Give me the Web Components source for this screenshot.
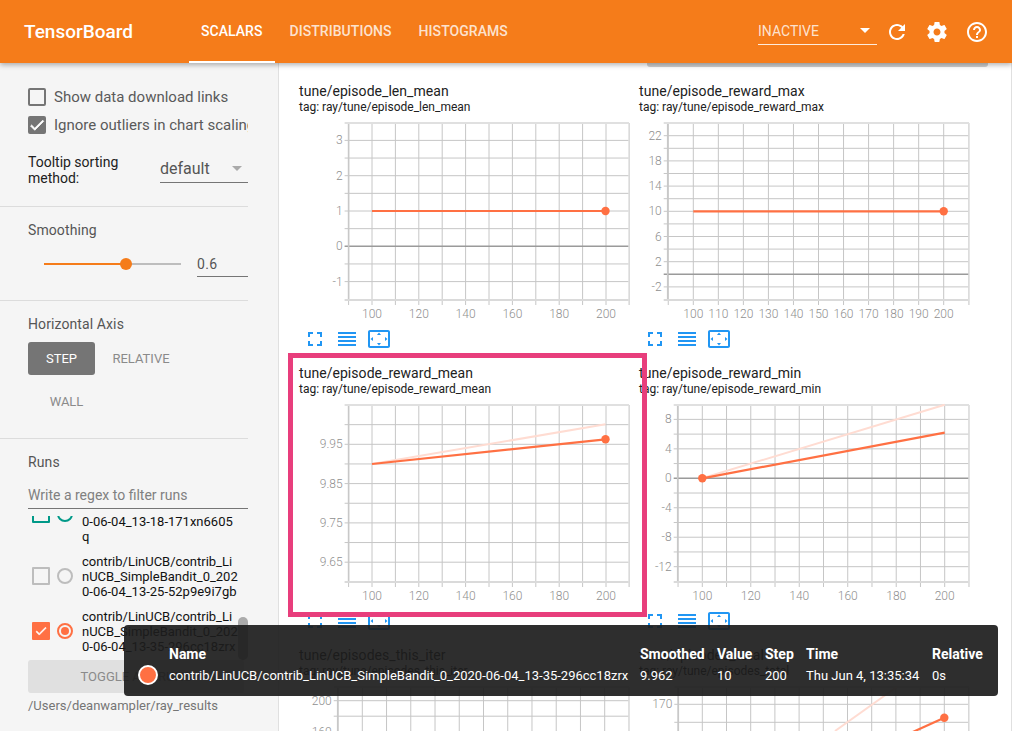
<!doctype html>
<html>
<head>
<meta charset="utf-8">
<title>TensorBoard</title>
<style>
html, body {
  margin: 0;
  height: 100%;
  overflow: hidden;
  background: white;
  font-family: Roboto, "Liberation Sans", sans-serif;
}
</style>
</head>
<body>
<tb-app>
  <tb-header></tb-header>
  <div slot="body" style="display: flex; height: 668px;">
    <tb-sidebar></tb-sidebar>
    <tb-main>
      <scalar-card name="tune/episode_len_mean" tag="ray/tune/episode_len_mean"
        spec='{"l":49.6,"r":330,"xa":73,"xs":23.4,"every":2,"ya":97,"va":1,"ys":17.65,"vs":0.5,"dp":0,"main":[[73,97],[306.5,97]],"dotAt":[306.5,97]}'></scalar-card>
      <scalar-card name="tune/episode_reward_max" tag="ray/tune/episode_reward_max"
        spec='{"l":28.7,"r":330,"xa":54.3,"xs":25.04,"every":1,"ya":97.3,"va":10,"ys":12.6,"vs":2,"dp":0,"main":[[54.3,97.3],[304.7,97.3]],"dotAt":[304.7,97.3]}'></scalar-card>
      <scalar-card name="tune/episode_reward_mean" tag="ray/tune/episode_reward_mean"
        spec='{"l":49.6,"r":330,"xa":73,"xs":23.4,"every":2,"ya":48.3,"va":9.95,"ys":19.65,"vs":-0.05,"dp":2,"main":[[73,68],[306.5,43.3]],"faint":[[73,68],[306.5,28.3]],"dotAt":[306.5,43.3]}'></scalar-card>
      <scalar-card name="tune/episode_reward_min" tag="ray/tune/episode_reward_min"
        spec='{"l":38.7,"r":330,"xa":63.3,"xs":24.24,"every":2,"ya":82.3,"va":0,"ys":14.73,"vs":-2,"dp":0,"main":[[63.3,82.3],[305.7,36.7]],"faint":[[63.3,82.3],[305.7,8.7]],"dotAt":[63.3,82.3]}'></scalar-card>
      <scalar-card name="tune/episodes_this_iter" tag="ray/tune/episodes_this_iter"
        spec='{"l":38.7,"r":330,"xa":63.3,"xs":24.24,"every":2,"ya":22.7,"va":200,"ys":15.5,"vs":-20,"dp":0}'></scalar-card>
      <scalar-card name="tune/episodes_total" tag="ray/tune/episodes_total"
        spec='{"l":39.3,"r":330,"xa":63.3,"xs":24.2,"every":2,"ya":26.3,"va":170,"ys":18,"vs":-5,"dp":0,"main":[[200,87.5],[305.3,39.7]],"faint":[[196,53],[257.7,9]],"dotAt":[305.3,39.7]}'></scalar-card>
    </tb-main>
  </div>
  <tb-highlight></tb-highlight>
  <tb-tooltip></tb-tooltip>
</tb-app>

<script>
'use strict';

(function() {

const ICONS = {
  refresh: 'M17.65 6.35C16.2 4.9 14.21 4 12 4c-4.42 0-7.99 3.58-7.99 8s3.57 8 7.99 8c3.73 0 6.84-2.55 7.73-6h-2.08c-.82 2.33-3.04 4-5.65 4-3.31 0-6-2.69-6-6s2.69-6 6-6c1.66 0 3.14.69 4.22 1.78L13 11h7V4l-2.35 2.35z',
  settings: 'M19.43 12.98c.04-.32.07-.64.07-.98s-.03-.66-.07-.98l2.11-1.65c.19-.15.24-.42.12-.64l-2-3.46c-.12-.22-.39-.3-.61-.22l-2.49 1c-.52-.4-1.08-.73-1.69-.98l-.38-2.65C14.46 2.18 14.25 2 14 2h-4c-.25 0-.46.18-.49.42l-.38 2.65c-.61.25-1.17.59-1.69.98l-2.49-1c-.23-.09-.49 0-.61.22l-2 3.46c-.13.22-.07.49.12.64l2.11 1.65c-.04.32-.07.65-.07.98s.03.66.07.98l-2.11 1.65c-.19.15-.24.42-.12.64l2 3.46c.12.22.39.3.61.22l2.49-1c.52.4 1.08.73 1.69.98l.38 2.65c.03.24.24.42.49.42h4c.25 0 .46-.18.49-.42l.38-2.65c.61-.25 1.17-.59 1.69-.98l2.49 1c.23.09.49 0 .61-.22l2-3.46c.12-.22.07-.49-.12-.64l-2.11-1.65zM12 15.5c-1.93 0-3.5-1.57-3.5-3.5s1.57-3.5 3.5-3.5 3.5 1.57 3.5 3.5-1.57 3.5-3.5 3.5z',
  help: 'M11 18h2v-2h-2v2zm1-16C6.48 2 2 6.48 2 12s4.48 10 10 10 10-4.48 10-10S17.52 2 12 2zm0 18c-4.41 0-8-3.59-8-8s3.59-8 8-8 8 3.59 8 8-3.59 8-8 8zm0-14c-2.21 0-4 1.79-4 4h2c0-1.1.9-2 2-2s2 .9 2 2c0 2-3 1.75-3 5h2c0-2.25 3-2.5 3-5 0-2.21-1.79-4-4-4z',
  fullscreen: 'M7 14H5v5h5v-2H7v-3zm-2-4h2V7h3V5H5v5zm12 7h-3v2h5v-5h-2v3zM14 5v2h3v3h2V5h-5z',
  reorder: 'M3 15h18v-2H3v2zm0 4h18v-2H3v2zm0-8h18V9H3v2zm0-6v2h18V5H3z',
  overscan: 'M12.01 5.5L10 8h4l-1.99-2.5zM18 10v4l2.5-1.99L18 10zM6 10l-2.5 2.01L6 14v-4zm8 6h-4l2.01 2.5L14 16zm7-13H3c-1.1 0-2 .9-2 2v14c0 1.1.9 2 2 2h18c1.1 0 2-.9 2-2V5c0-1.1-.9-2-2-2zm0 16.01H3V4.99h18v14.02z',
};

function icon(name) {
  return `<svg width="24" height="24" viewBox="0 0 24 24" fill="currentColor"><path d="${ICONS[name]}"/></svg>`;
}

const CHECK = `<svg width="18" height="18" viewBox="0 0 24 24" fill="white"><path d="M9 16.17L4.83 12l-1.42 1.41L9 19 21 7l-1.41-1.41z" stroke="white" stroke-width="1"/></svg>`;

class TbApp extends HTMLElement {
  constructor() {
    super();
    const root = this.attachShadow({mode: 'open'});
    root.innerHTML = `
<style>
:host {
  display: block;
  position: relative;
  width: 1012px;
  height: 731px;
  overflow: hidden;
}
</style>
<slot></slot>
<slot name="body"></slot>
    `;
  }
}

class TbHeader extends HTMLElement {
  constructor() {
    super();
    const root = this.attachShadow({mode: 'open'});
    root.innerHTML = `
<style>
:host {
  display: flex;
  align-items: center;
  position: relative;
  z-index: 2;
  height: 63px;
  background: #f57c1a;
  color: white;
  box-shadow: 0 2px 5px rgba(0, 0, 0, 0.3);
}
#name {
  font-size: 19px;
  font-weight: 500;
  margin-left: 24px;
  width: 165px;
}
#tabs {
  display: flex;
  align-self: stretch;
  flex: 1;
  font-size: 14px;
  font-weight: 500;
  letter-spacing: 0.05px;
}
.tab {
  display: flex;
  align-items: center;
  justify-content: center;
  padding: 0 14px;
  color: rgba(255, 255, 255, 0.8);
  box-sizing: border-box;
  border-bottom: 2px solid transparent;
}
.tab:nth-child(2) {
  padding: 0 13px 0 15px;
}
.tab.on {
  color: white;
  border-bottom-color: white;
  padding: 0 12px;
  min-width: 85px;
}
#picker {
  box-sizing: border-box;
  width: 119px;
  height: 25px;
  margin-top: 1px;
  padding-bottom: 2px;
  border-bottom: 1px solid rgba(255, 255, 255, 0.85);
  font-size: 14px;
  color: rgba(255, 255, 255, 0.8);
  display: flex;
  align-items: center;
  justify-content: space-between;
}
#arrow {
  width: 0;
  height: 0;
  margin-right: 7px;
  border: 5px solid transparent;
  border-top-color: white;
  border-bottom: 0;
}
#icons {
  display: flex;
  margin: 0 23px 0 8px;
  gap: 16px;
  width: 104px;
}
#icons svg { display: block; flex: none; }
</style>
<div id="name">TensorBoard</div>
<div id="tabs">
  <div class="tab on">SCALARS</div>
  <div class="tab">DISTRIBUTIONS</div>
  <div class="tab">HISTOGRAMS</div>
</div>
<div id="picker"><span>INACTIVE</span><span id="arrow"></span></div>
<div id="icons">${icon('refresh')}${icon('settings')}${icon('help')}</div>
    `;
  }
}

class TbCheckbox extends HTMLElement {
  constructor() {
    super();
    const root = this.attachShadow({mode: 'open'});
    const checked = this.hasAttribute('checked');
    root.innerHTML = `
<style>
:host {
  display: flex;
  align-items: center;
  gap: 8px;
  white-space: nowrap;
  overflow: hidden;
  font-size: 15px;
  color: #5a5a5a;
}
#box {
  flex: none;
  box-sizing: border-box;
  width: 18px;
  height: 18px;
  border-radius: 2px;
  border: 2px solid #757575;
  display: flex;
  align-items: center;
  justify-content: center;
}
:host([checked]) #box {
  background: #757575;
}
svg { flex: none; }
</style>
<div id="box">${checked ? CHECK : ''}</div>
<slot></slot>
    `;
  }
}

class TbRun extends HTMLElement {
  constructor() {
    super();
    const root = this.attachShadow({mode: 'open'});
    const color = this.getAttribute('color') || '#bdbdbd';
    const checked = this.hasAttribute('checked');
    root.innerHTML = `
<style>
:host {
  display: flex;
  align-items: center;
  padding: 5px 0;
  font-size: 13px;
  line-height: 15px;
  color: #111;
}
#box {
  flex: none;
  box-sizing: border-box;
  width: 18px;
  height: 18px;
  margin-left: 4px;
  border-radius: 1px;
  border: 2px solid ${color};
  background: ${checked ? color : 'transparent'};
  display: flex;
  align-items: center;
  justify-content: center;
}
#radio {
  flex: none;
  box-sizing: border-box;
  width: 16px;
  height: 16px;
  margin: 0 9px 0 7px;
  border-radius: 50%;
  border: 2px solid ${color};
  display: flex;
  align-items: center;
  justify-content: center;
}
#dot {
  width: 8px;
  height: 8px;
  border-radius: 50%;
  background: ${checked ? color : 'transparent'};
}
#text {
  width: 156px;
  word-break: break-all;
}
</style>
<div id="box">${checked ? CHECK : ''}</div>
<div id="radio"><div id="dot"></div></div>
<div id="text"><slot></slot></div>
    `;
  }
}

class TbSidebar extends HTMLElement {
  constructor() {
    super();
    const root = this.attachShadow({mode: 'open'});
    root.innerHTML = `
<style>
:host {
  display: block;
  flex: none;
  position: relative;
  box-sizing: border-box;
  width: 279px;
  height: 668px;
  background: #f5f5f5;
  border-right: 1px solid #e0e0e0;
  overflow: hidden;
  color: #555;
  font-size: 14px;
}
section {
  box-sizing: border-box;
  width: 248px;
  padding-left: 28px;
  border-bottom: 1px solid #dcdcdc;
}
#one { height: 144px; padding-top: 25px; }
#two { height: 94px; padding-top: 15px; }
#three { height: 138px; padding-top: 15px; }
#four { border: 0; padding-top: 15px; }
h3 {
  margin: 0;
  font-size: 14px;
  font-weight: 400;
  line-height: 16px;
  letter-spacing: 0.1px;
  color: #555;
}
tb-checkbox + tb-checkbox { margin-top: 10px; }
#sort {
  display: flex;
  margin-top: 20px;
  color: #212121;
}
#sort label {
  width: 132px;
  font-size: 14px;
  line-height: 15.5px;
  padding-top: 1px;
}
#select {
  box-sizing: border-box;
  flex: 1;
  height: 30px;
  margin-top: -1px;
  padding-top: 2px;
  border-bottom: 1px solid #757575;
  display: flex;
  align-items: center;
  justify-content: space-between;
  font-size: 16px;
  color: #555;
}
#select i {
  width: 0;
  height: 0;
  margin-right: 6px;
  border: 5px solid transparent;
  border-top-color: #aaa;
  border-bottom: 0;
}
#slider {
  display: flex;
  align-items: flex-start;
  margin-top: 14px;
  height: 32px;
}
#track {
  position: relative;
  width: 137px;
  height: 2px;
  margin: 11px 0 0 16px;
  background: linear-gradient(to right, #f57c1a 60%, #bdbdbd 60%);
}
#track::after {
  content: '';
  position: absolute;
  left: 76px;
  top: -5px;
  width: 12px;
  height: 12px;
  border-radius: 50%;
  background: #f57c1a;
}
#value {
  box-sizing: border-box;
  width: 51px;
  height: 25px;
  margin-left: 16px;
  line-height: 24px;
  border-bottom: 1px solid #757575;
  font-size: 14px;
  letter-spacing: 0.3px;
  color: #555;
}
#axis {
  display: flex;
  flex-wrap: wrap;
  margin-top: 10px;
  font-size: 13px;
  color: #8a8a8a;
}
#axis div {
  box-sizing: border-box;
  height: 33px;
  display: flex;
  align-items: center;
  justify-content: center;
  border-radius: 3px;
}
#axis .on {
  width: 67px;
  background: #757575;
  color: white;
}
#axis .rel { width: 92px; }
#axis .wall { width: 77px; margin-top: 10px; }
#filter {
  box-sizing: border-box;
  height: 27px;
  margin-top: 12px;
  line-height: 26px;
  border-bottom: 1px solid #757575;
  font-size: 14px;
  color: #808080;
}
#list {
  height: 139px;
  margin-top: 7px;
  overflow: hidden;
}
#list > div { margin-top: -37.5px; }
#toggle {
  box-sizing: border-box;
  width: 216px;
  height: 33px;
  margin-top: 5px;
  border-radius: 3px;
  background: #e0e0e0;
  color: #8a8a8a;
  font-size: 13px;
  display: flex;
  align-items: center;
  justify-content: center;
}
#path {
  margin-top: 5px;
  line-height: 16px;
  font-size: 13px;
  color: #757575;
  white-space: nowrap;
}
#thumb {
  position: absolute;
  left: 238px;
  top: 554px;
  width: 10px;
  height: 43px;
  border-radius: 5px;
  background: rgba(110, 110, 110, 0.55);
}
</style>
<section id="one">
  <tb-checkbox>Show data download links</tb-checkbox>
  <tb-checkbox checked>Ignore outliers in chart scaling</tb-checkbox>
  <div id="sort">
    <label>Tooltip sorting method:</label>
    <div id="select"><span>default</span><i></i></div>
  </div>
</section>
<section id="two">
  <h3>Smoothing</h3>
  <div id="slider"><div id="track"></div><div id="value">0.6</div></div>
</section>
<section id="three">
  <h3>Horizontal Axis</h3>
  <div id="axis">
    <div class="on">STEP</div>
    <div class="rel">RELATIVE</div>
    <div class="wall">WALL</div>
  </div>
</section>
<section id="four">
  <h3>Runs</h3>
  <div id="filter">Write a regex to filter runs</div>
  <div id="list"><div>
    <tb-run color="#009988">contrib/LinUCB/contrib_LinUCB_SimpleBandit_0_2020-06-04_13-18-171xn6605q</tb-run>
    <tb-run>contrib/LinUCB/contrib_LinUCB_SimpleBandit_0_2020-06-04_13-25-52p9e9i7gb</tb-run>
    <tb-run color="#ff7043" checked>contrib/LinUCB/contrib_LinUCB_SimpleBandit_0_2020-06-04_13-35-296cc18zrx</tb-run>
  </div></div>
  <div id="toggle">TOGGLE ALL RUNS</div>
  <div id="path">/Users/deanwampler/ray_results</div>
</section>
<div id="thumb"></div>
    `;
  }
}

class TbMain extends HTMLElement {
  constructor() {
    super();
    const root = this.attachShadow({mode: 'open'});
    root.innerHTML = `
<style>
:host {
  display: block;
  flex: 1;
  min-width: 0;
  height: 668px;
  overflow: hidden;
  box-sizing: border-box;
  background: white;
  border-right: 1px solid #e0e0e0;
}
#stub {
  width: 341px;
  height: 4px;
  margin-left: 368px;
  background: #cfcfcf;
  border-radius: 0 0 3px 3px;
}
#grid {
  display: grid;
  grid-template-columns: 340px 340px;
  grid-auto-rows: 282px;
  padding: 15px 0 0 20px;
}
</style>
<div id="stub"></div>
<div id="grid"><slot></slot></div>
    `;
  }
}

// Draws the grid, ticks and series in one chart. Everything in spec is in
// pixels from the svg's corner, since the plot rect is always the same height.
class ScalarCard extends HTMLElement {
  constructor() {
    super();
    const root = this.attachShadow({mode: 'open'});
    const spec = JSON.parse(this.getAttribute('spec'));
    root.innerHTML = `
<style>
:host {
  display: block;
  color: #212121;
}
#title {
  font-size: 14px;
  line-height: 18px;
  letter-spacing: 0.05px;
  white-space: nowrap;
}
#tag {
  font-size: 12px;
  line-height: 14px;
  margin-top: -0.5px;
  white-space: nowrap;
}
svg.plot {
  display: block;
  overflow: visible;
}
text {
  font-family: Roboto, sans-serif;
  font-size: 12px;
  font-weight: 300;
  fill: #8f8f8f;
}
#icons {
  display: flex;
  width: 96px;
  color: #2196f3;
}
#icons span {
  display: block;
  width: 32px;
  height: 24px;
  text-align: center;
}
</style>
<div id="title">${this.getAttribute('name')}</div>
<div id="tag">tag: ${this.getAttribute('tag')}</div>
<svg class="plot" width="340" height="213">${this.plot_(spec)}</svg>
<div id="icons"><span>${icon('fullscreen')}</span><span>${icon('reorder')}</span><span>${icon('overscan')}</span></div>
    `;
  }

  plot_(s) {
    const top = 9;
    const bottom = 186;
    let out = '';
    const line = (x1, y1, x2, y2, color, w) => {
      out += `<line x1="${x1}" y1="${y1}" x2="${x2}" y2="${y2}" stroke="${color}" stroke-width="${w}"/>`;
    };

    // vertical grid, one line per 10 steps starting at 90
    for (let i = -1; i * s.xs + s.xa <= s.r + 1; i++) {
      const x = s.xa + i * s.xs;
      line(x, top, x, bottom + 5, '#c6c6c6', 1);
      if (i >= 0 && i <= 10 && i % s.every === 0) {
        out += `<text x="${x}" y="${bottom + 18}" text-anchor="middle">${100 + i * 10}</text>`;
      }
    }

    // horizontal grid, walking both ways from the anchor tick
    const kMin = Math.ceil((top + 2 - s.ya) / s.ys);
    const kMax = Math.floor((bottom - 2 - s.ya) / s.ys);
    for (let k = kMin; k <= kMax; k++) {
      const y = s.ya + k * s.ys;
      const v = s.va + k * s.vs * (s.vs > 0 ? -1 : 1);
      const zero = Math.abs(v) < 1e-9;
      line(s.l - 4, y, s.r, y, zero ? '#9a9a9a' : '#c6c6c6', zero ? 1.4 : 1);
      if (k % 2 === 0) {
        out += `<text x="${s.l - 6}" y="${y + 4}" text-anchor="end">${v.toFixed(s.dp)}</text>`;
      }
    }

    line(s.l, top - 1, s.l, bottom + 1, '#c8c8c8', 1.6);
    line(s.l - 4, top, s.r, top, '#e0e0e0', 2);
    line(s.l - 4, bottom, s.r, bottom, '#dadada', 2);
    line(s.r, top, s.r, bottom + 5, '#e0e0e0', 1.4);

    if (s.faint) {
      line(s.faint[0][0], s.faint[0][1], s.faint[1][0], s.faint[1][1], '#ffdcd2', 2);
    }
    if (s.main) {
      line(s.main[0][0], s.main[0][1], s.main[1][0], s.main[1][1], '#ff7043', 2.2);
    }
    if (s.dotAt) {
      out += `<circle cx="${s.dotAt[0]}" cy="${s.dotAt[1]}" r="4.2" fill="#ff7043"/>`;
    }
    return out;
  }
}

class TbHighlight extends HTMLElement {
  constructor() {
    super();
    const root = this.attachShadow({mode: 'open'});
    root.innerHTML = `
<style>
:host {
  position: absolute;
  z-index: 3;
  left: 288px;
  top: 353px;
  width: 359px;
  height: 264px;
  box-sizing: border-box;
  border: 5px solid #e83e7c;
  pointer-events: none;
}
</style>
    `;
  }
}

class TbTooltip extends HTMLElement {
  constructor() {
    super();
    const root = this.attachShadow({mode: 'open'});
    root.innerHTML = `
<style>
:host {
  position: absolute;
  z-index: 4;
  left: 124px;
  top: 625px;
  width: 874px;
  height: 71px;
  box-sizing: border-box;
  padding-top: 19px;
  border-radius: 4px;
  background: rgba(28, 28, 28, 0.92);
  color: white;
  font-size: 13px;
  display: grid;
  grid-template-columns: 45px 471px 77px 48px 41px 126px 1fr;
  grid-template-rows: 20px 22px;
  align-items: center;
  white-space: nowrap;
}
b { font-weight: 700; font-size: 14px; }
#swatch {
  justify-self: center;
  margin-left: 3px;
  box-sizing: border-box;
  width: 20px;
  height: 20px;
  border-radius: 50%;
  background: #ff7043;
  border: 2px solid white;
}
</style>
<span></span><b>Name</b><b>Smoothed</b><b>Value</b><b>Step</b><b>Time</b><b>Relative</b>
<span id="swatch"></span><span>contrib/LinUCB/contrib_LinUCB_SimpleBandit_0_2020-06-04_13-35-296cc18zrx</span><span>9.962</span><span>10</span><span>200</span><span>Thu Jun 4, 13:35:34</span><span>0s</span>
    `;
  }
}

customElements.define('tb-app', TbApp);
customElements.define('tb-header', TbHeader);
customElements.define('tb-checkbox', TbCheckbox);
customElements.define('tb-run', TbRun);
customElements.define('tb-sidebar', TbSidebar);
customElements.define('tb-main', TbMain);
customElements.define('scalar-card', ScalarCard);
customElements.define('tb-highlight', TbHighlight);
customElements.define('tb-tooltip', TbTooltip);

}());
</script>
</body>
</html>
